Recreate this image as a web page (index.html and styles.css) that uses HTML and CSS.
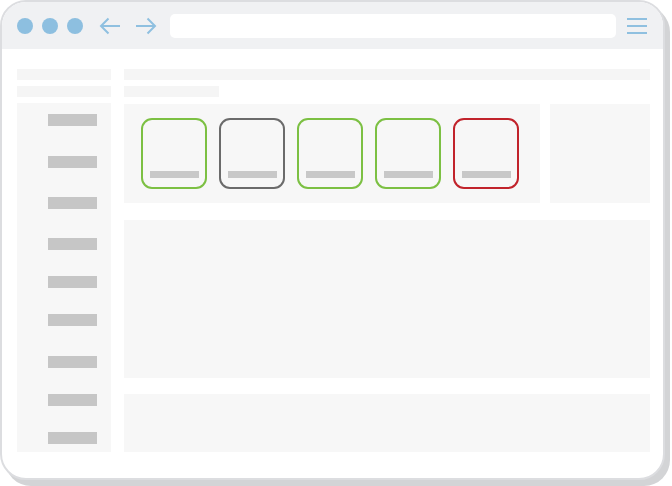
FILE: index.html
```html
<!DOCTYPE html>
<html>
<head>
<meta charset="utf-8">
<link rel="stylesheet" href="styles.css">
</head>
<body>
<div class="window">
  <div class="header">
    <span class="dot"></span><span class="dot"></span><span class="dot"></span>
    <svg class="arrow arrow-back" width="22" height="18" viewBox="0 0 22 18"><path d="M21 9H2M9.5 1.5L2 9l7.5 7.5" fill="none" stroke="#8fc0e0" stroke-width="2"/></svg>
    <svg class="arrow arrow-fwd" width="22" height="18" viewBox="0 0 22 18"><path d="M1 9h19M12.5 1.5L20 9l-7.5 7.5" fill="none" stroke="#8fc0e0" stroke-width="2"/></svg>
    <div class="url"></div>
    <svg class="menu" width="20" height="18" viewBox="0 0 20 18"><path d="M0 2h20M0 9h20M0 16h20" stroke="#8fc0e0" stroke-width="2.2"/></svg>
  </div>
  <div class="body">
    <div class="left">
      <div class="line"></div>
      <div class="line"></div>
      <div class="sidebar">
        <div class="item"></div>
        <div class="item plus4"></div>
        <div class="item plus3"></div>
        <div class="item plus3"></div>
        <div class="item"></div>
        <div class="item"></div>
        <div class="item plus4"></div>
        <div class="item"></div>
        <div class="item"></div>
      </div>
    </div>
    <div class="main">
      <div class="line"></div>
      <div class="line short"></div>
      <div class="row">
        <div class="panel cards">
          <div class="card green"><div class="label"></div></div>
          <div class="card gray"><div class="label"></div></div>
          <div class="card green"><div class="label"></div></div>
          <div class="card green"><div class="label"></div></div>
          <div class="card red"><div class="label"></div></div>
        </div>
        <div class="panel side"></div>
      </div>
      <div class="panel big"></div>
      <div class="panel bottom"></div>
    </div>
  </div>
</div>
</body>
</html>
```
FILE: styles.css
```css
html, body { margin: 0; padding: 0; background: #ffffff; }
body { width: 672px; height: 486px; overflow: hidden; }
.window {
  box-sizing: border-box;
  width: 665px;
  height: 480px;
  border: 2px solid #dcdde0;
  border-radius: 26px;
  box-shadow: 5px 6px 0 #d3d4d6;
  background: #ffffff;
  overflow: hidden;
}
.header {
  height: 47px;
  background: #f0f1f3;
  display: flex;
  align-items: center;
  padding-left: 15px;
}
.dot {
  width: 16px; height: 16px; border-radius: 50%;
  background: #8dbfe0;
  margin-right: 9px;
  flex: none;
}
.arrow { flex: none; display: block; }
.arrow-back { margin-left: 7px; }
.arrow-fwd { margin-left: 14px; }
.url {
  width: 446px; height: 24px;
  background: #ffffff;
  border-radius: 5px;
  margin-left: 13px;
  flex: none;
}
.menu { margin-left: 11px; flex: none; display: block; }
.body {
  display: flex;
  gap: 13px;
  padding: 20px 0 0 15px;
}
.left { width: 94px; display: flex; flex-direction: column; gap: 6px; flex: none; }
.main { width: 526px; display: flex; flex-direction: column; flex: none; }
.line { height: 11px; background: #f5f5f5; }
.main .line { margin-bottom: 6px; }
.main .line.short { width: 95px; margin-bottom: 7px; }
.sidebar {
  height: 349px;
  background: #f7f7f7;
  display: flex;
  flex-direction: column;
  gap: 26px;
  padding-top: 11px;
  box-sizing: border-box;
}
.item { width: 49px; height: 12px; background: #c6c6c6; margin-left: 31px; }
.item.plus4 { margin-top: 4px; }
.item.plus3 { margin-top: 3px; }
.panel { background: #f7f7f7; }
.row { display: flex; gap: 10px; height: 99px; }
.cards {
  width: 416px;
  display: flex;
  gap: 12px;
  padding: 14px 0 0 17px;
  box-sizing: border-box;
}
.side { width: 100px; }
.card {
  box-sizing: border-box;
  width: 66px; height: 71px;
  border: 2px solid;
  border-radius: 11px;
  display: flex;
  align-items: flex-end;
  padding: 0 0 9px 7px;
}
.card.green { border-color: #7cc043; }
.card.gray { border-color: #6b6b6b; }
.card.red { border-color: #c1232b; }
.label { width: 49px; height: 7px; background: #c8c8c8; }
.big { height: 158px; margin-top: 17px; }
.bottom { height: 58px; margin-top: 16px; }
```
